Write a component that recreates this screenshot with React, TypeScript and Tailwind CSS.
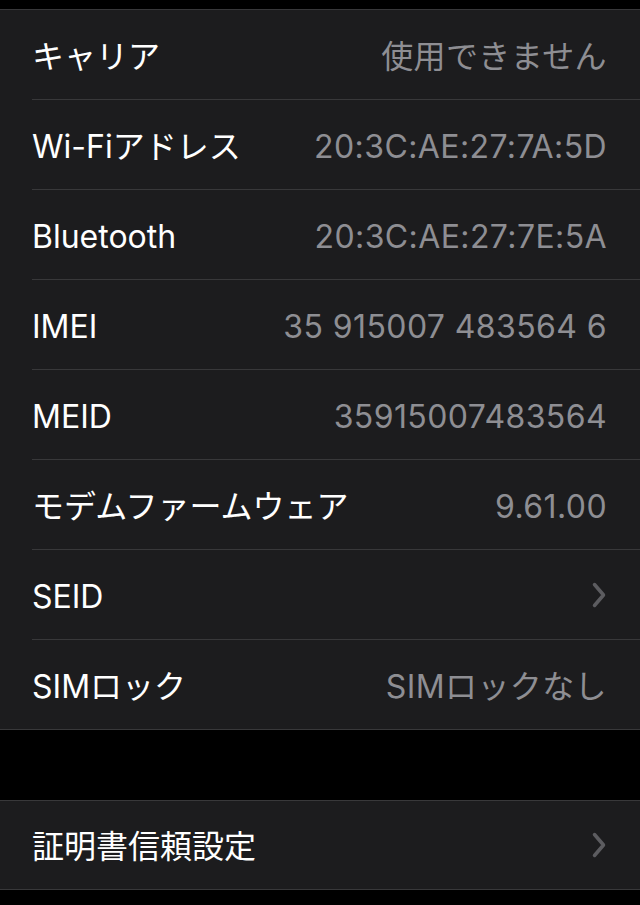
const rows: { label: string; value?: string; chevron?: boolean }[] = [
  { label: 'キャリア', value: '使用できません' },
  { label: 'Wi-Fiアドレス', value: '20:3C:AE:27:7A:5D' },
  { label: 'Bluetooth', value: '20:3C:AE:27:7E:5A' },
  { label: 'IMEI', value: '35 915007 483564 6' },
  { label: 'MEID', value: '35915007483564' },
  { label: 'モデムファームウェア', value: '9.61.00' },
  { label: 'SEID', chevron: true },
  { label: 'SIMロック', value: 'SIMロックなし' },
]

function Chevron() {
  return (
    <svg width="16" height="26" viewBox="0 0 16 26" className="-mt-1 text-[#5c5c60]">
      <path d="M3.5 2.5 L12.5 13 L3.5 23.5" fill="none" stroke="currentColor" strokeWidth="3.5" strokeLinecap="round" strokeLinejoin="round" />
    </svg>
  )
}

function Row({ label, value, chevron, last, h = 'h-[90px]' }: { label: string; value?: string; chevron?: boolean; last?: boolean; h?: string }) {
  return (
    <div className="pl-8">
      <div
        className={`flex ${h} items-center justify-between pt-[4px] pr-[33px] ${
          last ? '' : 'border-b border-[#38383a]'
        }`}
      >
        <span className="text-[32px] text-white">{label}</span>
        {value && <span className="text-[32px] tracking-[0.4px] text-[#8e8e93]">{value}</span>}
        {chevron && <Chevron />}
      </div>
    </div>
  )
}

export default function App() {
  return (
    <div
      className="min-h-[905px] bg-black pt-[9px]"
      style={{ fontFamily: 'Inter, "Noto Sans CJK JP", sans-serif' }}
    >
      <div className="border-y border-[#38383a] bg-[#1c1c1e]">
        {rows.map((r, i) => (
          <Row key={r.label} {...r} last={i === rows.length - 1} h={i === rows.length - 1 ? 'h-[89px]' : 'h-[90px]'} />
        ))}
      </div>
      <div className="mt-[70px] border-y border-[#38383a] bg-[#1c1c1e]">
        <Row label="証明書信頼設定" chevron last h="h-[88px]" />
      </div>
    </div>
  )
}
